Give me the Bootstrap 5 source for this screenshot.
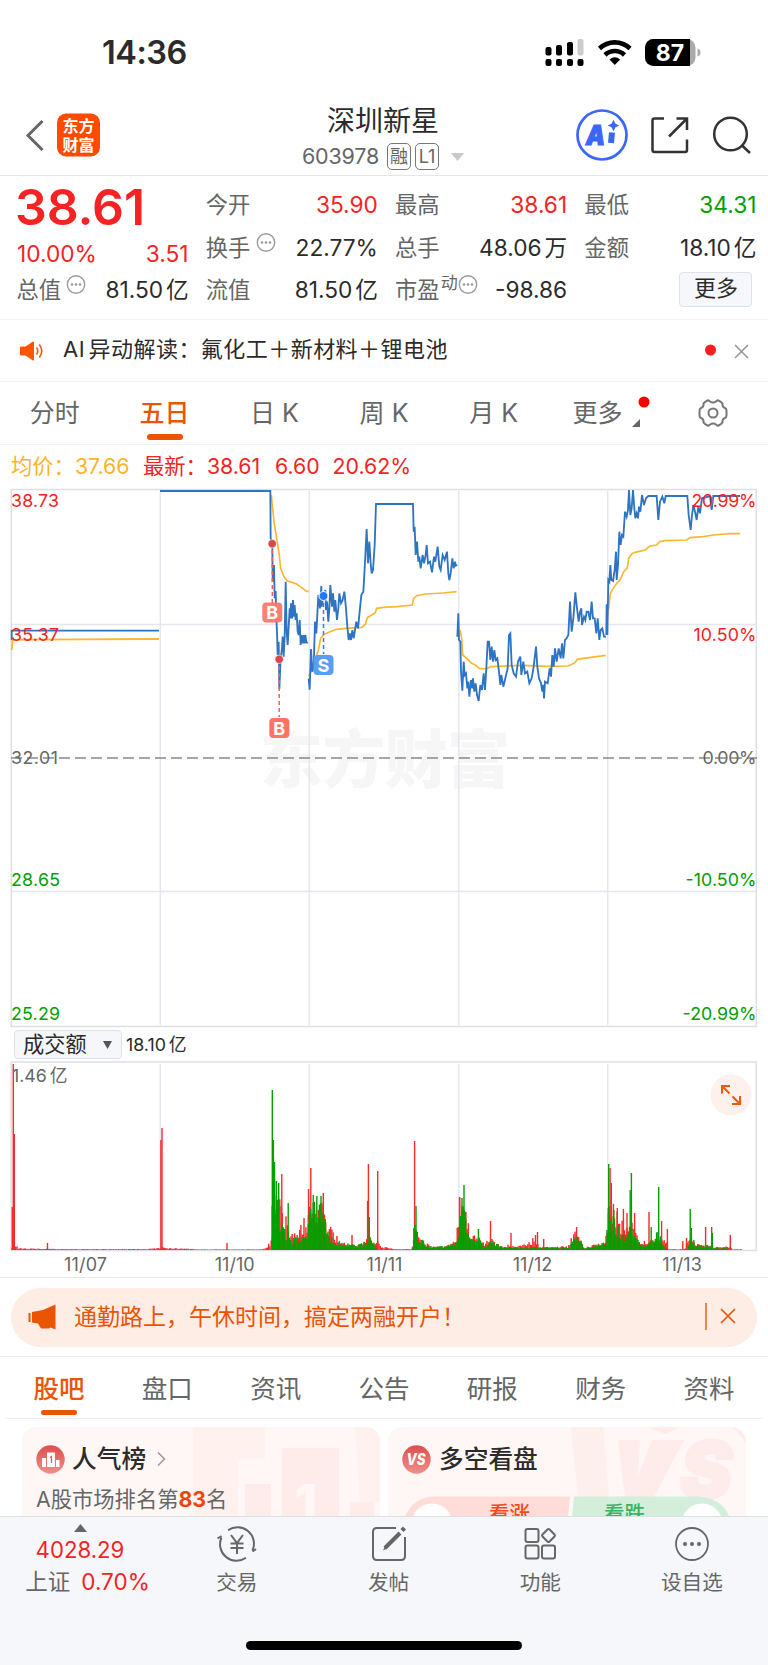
<!DOCTYPE html>
<html lang="zh-CN">
<head>
<meta charset="utf-8">
<meta name="viewport" content="width=device-width, initial-scale=1">
<title>深圳新星 603978</title>
<link href="https://cdn.jsdelivr.net/npm/bootstrap@5.3.0/dist/css/bootstrap.min.css" rel="stylesheet">
<style>
:root{--up:#f52323;--down:#00a000;--brand:#ea5504;--ink:#2b2b2b;--sub:#666}
body{font-family:Inter,"Noto Sans CJK SC",sans-serif;color:var(--ink);background:#fff;width:768px;height:1665px;overflow:hidden;line-height:1}
svg{display:block;flex:none}
svg text{font-family:Inter,"Noto Sans CJK SC",sans-serif}
.up{color:var(--up)}.down{color:var(--down)}.brand{color:var(--brand)}.sub{color:var(--sub)}
.status{height:100px;padding:6px 67px 0 102px}
.clock{font-size:32.5px;font-weight:600;letter-spacing:-.5px}
.topbar{height:76px;border-bottom:1.5px solid #e6e6e6;padding:0 16px 0 24px}
.topbar .side{width:250px;padding-bottom:5px}
.topbar .mid{margin-left:-10px}
.stock{font-size:28px;line-height:32px}
.code{font-size:21.5px;letter-spacing:-.2px;margin-top:6px}
.chip{border:1.3px solid #777;border-radius:5px;height:27px;width:24px;font-size:18px;letter-spacing:0}
.quote{height:144px;padding:8px 12px 0 17px;border-bottom:1.5px solid #f3f3f3;display:grid;grid-template-columns:repeat(4,171.6px);column-gap:17.7px;grid-template-rows:repeat(3,42.7px);font-size:22.3px;align-items:center}
.quote .num{font-size:22.7px;word-spacing:-3.5px}
.quote .sub{margin-left:-.5px}
.quote .sub svg{margin-top:-4px}
.price{font-size:50px;font-weight:600;letter-spacing:-.1px;margin:3px 0 0 -2px}
.chg{margin-top:-4px}
.more{width:73px;height:35px;background:#f6f7fa;border:1.5px solid #dfe2e8;border-radius:4px;font-size:22px;margin:-3px 4px 0 0;padding-bottom:2px}
.news{height:62px;border-bottom:1.5px solid #f3f3f3;padding:0 19px 0 20px;font-size:22px}
.news .msg{margin:-4px 0 0 19px;letter-spacing:.45px;word-spacing:-3px}
.tabs{height:63px;border-bottom:1.5px solid #f3f3f3;font-size:25px;color:var(--sub)}
.tabs>div{width:110px}
.on{color:var(--brand);font-weight:500}
.on::after{content:"";position:absolute;left:50%;margin-left:-18px;width:36px;height:5.5px;border-radius:3px;background:var(--brand);bottom:4.5px}
.legend5{height:40px;padding:4px 0 0 11px;font-size:21.3px}
.pick{width:108px;height:29px;background:#f6f7fa;border:1.5px solid #dfe2e8;border-radius:4px;font-size:21.2px;padding:0 9px 0 8px}
.turn{font-size:17.8px;margin-left:4px;word-spacing:-2px}
.promo{height:59.5px;border-radius:30px;background:#feede5;margin:10px 11px 0;padding:0 21px 0 17px;font-size:23px}
.tabs2{height:62px;margin:0 5px;padding-top:2px;font-size:25.5px;color:var(--sub);border-bottom:1.5px solid #eee;}
.tabs2>div{width:108px}
.tabs2 .on::after{bottom:3px}
.rule{border-top:1.5px solid #e8e8e8}
.tiles{height:97px;padding:8px 22px 0;gap:8px;overflow:hidden}
.tile{width:358px;height:120px;border-radius:14px;background:#fff7f5;overflow:hidden}
.tile h2{font-size:24.7px;font-weight:500;margin:1px 0 0}
.dock{height:149px;background:#f6f7fa;border-top:1.5px solid #dddee1;font-size:20.6px;color:var(--sub)}
.dock .item{width:151.7px;padding-top:9px}
.dock .item span{margin-top:11px}
.homebar{width:276px;height:9.5px;border-radius:5px;background:#000;left:246px;bottom:15px}
</style>
</head>
<body>
<div class="status d-flex align-items-center justify-content-between">
  <span class="clock">14:36</span>
  <svg width="156" height="30" viewBox="545 37 156 30">
    <g fill="#000"><rect x="545.5" y="46" width="6" height="8.500" rx="2"/><rect x="556" y="44" width="6" height="10.500" rx="2"/><rect x="567" y="41" width="6" height="13.500" rx="2"/><rect x="577.500" y="38" width="6" height="16.500" rx="2" fill="#ccc"/>
    <rect x="545.5" y="58" width="6" height="7" rx="2"/><rect x="556" y="58" width="6" height="7" rx="2"/><rect x="567" y="58" width="6" height="7" rx="2"/><rect x="577.500" y="58" width="6" height="7" rx="2"/></g>
    <g fill="none" stroke="#000" stroke-width="4.600"><path d="M599.500 47.500a22 22 0 0 1 30.500 0"/><path d="M605 54a14 14 0 0 1 19.500 0"/></g><path d="M609.500 58.500q5.300-4.500 10.600 0l-5.300 5.500z"/>
    <rect x="645" y="38" width="50.500" height="27" rx="8.500" fill="#aaa"/><path d="M653.500 38H690v27h-36.500a8.500 8.500 0 0 1-8.500-8.500v-10a8.500 8.500 0 0 1 8.500-8.500z"/><path d="M697.500 47.500q3 1 3 4t-3 4z" fill="#aaa"/>
    <text x="670" y="59.500" font-size="23" font-weight="700" fill="#fff" text-anchor="middle">87</text>
  </svg>
</div>

<div class="topbar d-flex justify-content-between align-items-center">
  <div class="side d-flex align-items-center">
    <svg width="78" height="46" viewBox="24 112 78 46"><path d="M42.500 121 28 135.500l14.500 14.500" fill="none" stroke="#666" stroke-width="3"/><rect x="57" y="113.500" width="43" height="43" rx="9" fill="#ff4a00"/><g fill="#fff" font-size="16" font-weight="700" text-anchor="middle"><text x="78.500" y="132">东方</text><text x="78.500" y="150.500">财富</text></g></svg>
  </div>
  <div class="mid d-flex flex-column align-items-center">
    <div class="stock">深圳新星</div>
    <div class="code sub d-flex align-items-center gap-1">603978 <span class="chip d-flex align-items-center justify-content-center ms-1">融</span><span class="chip d-flex align-items-center justify-content-center">L1</span><svg class="ms-2" width="13" height="8"><path d="M0 0h13l-6.500 8z" fill="#c8c8c8"/></svg></div>
  </div>
  <div class="side d-flex justify-content-end align-items-center">
    <svg width="176" height="54" viewBox="576 108 176 54" fill="none" stroke="#333" stroke-width="2.500"><circle cx="602" cy="135" r="24.500" stroke="#3b66fa" stroke-width="2.700"/><text x="586" y="145" font-size="27" font-weight="900" font-style="italic" fill="#3b66fa" stroke="#3b66fa" stroke-width="1.200" textLength="19" lengthAdjust="spacingAndGlyphs">A</text><path d="M612 132.500 611 143" stroke="#3b66fa" stroke-width="6"/><path d="m613.500 121.500 1.300 2.700 2.700 1.300-2.700 1.300-1.300 2.700-1.300-2.700-2.700-1.300 2.700-1.300z" fill="#3b66fa" stroke="#3b66fa" stroke-width="1.500"/>
    <path d="M664 118.500h-9.500q-2 0-2 2v29.500q0 2 2 2H685q2 0 2-2v-10.500M669 136.500l18-18M676.500 118.500H687V130"/><circle cx="730.500" cy="134" r="16.300"/><path d="m742 145.500 8 7.500"/></svg>
  </div>
</div>

<div class="quote">
  <div class="price up">38.61</div>
  <div class="d-flex justify-content-between"><span class="sub">今开</span><span class="num up">35.90</span></div>
  <div class="d-flex justify-content-between"><span class="sub">最高</span><span class="num up">38.61</span></div>
  <div class="d-flex justify-content-between"><span class="sub">最低</span><span class="num down">34.31</span></div>
  <div class="chg d-flex justify-content-between up pt-3"><span class="num">10.00%</span><span class="num">3.51</span></div>
  <div class="d-flex justify-content-between"><span class="sub d-flex">换手<svg style="margin-left:6px" width="20" height="20"><use href="#dots"/></svg></span><span class="num">22.77%</span></div>
  <div class="d-flex justify-content-between"><span class="sub">总手</span><span class="num">48.06 万</span></div>
  <div class="d-flex justify-content-between"><span class="sub">金额</span><span class="num">18.10 亿</span></div>
  <div class="d-flex justify-content-between"><span class="sub d-flex">总值<svg style="margin-left:5px" width="20" height="20"><use href="#dots"/></svg></span><span class="num">81.50 亿</span></div>
  <div class="d-flex justify-content-between"><span class="sub">流值</span><span class="num">81.50 亿</span></div>
  <div class="d-flex justify-content-between"><span class="sub d-flex">市盈<span style="font-size:17px;margin:-4px 0 0 1px">动</span><svg width="20" height="20"><use href="#dots"/></svg></span><span class="num">-98.86</span></div>
  <div class="d-flex justify-content-end"><div class="more d-flex align-items-center justify-content-center">更多</div></div>
</div>
<svg width="0" height="0" class="position-absolute"><symbol id="dots" viewBox="0 0 20 20"><circle cx="10" cy="9.500" r="8.700" fill="none" stroke="#999" stroke-width="1.400"/><g fill="#999"><circle cx="6" cy="9.500" r="1.300"/><circle cx="10" cy="9.500" r="1.300"/><circle cx="14" cy="9.500" r="1.300"/></g></symbol></svg>

<div class="news d-flex align-items-center">
  <svg width="24" height="20" viewBox="0 0 24 20"><path d="M0 6.500q0-1 1-1h4.500L13 .5q1-.5 1 1v17q0 1.500-1 1L5.500 14.500H1q-1 0-1-1z" fill="#ff5500"/><path d="M16.500 6.500q2.500 3.500 0 7M19.300 3.500q5 6.500 0 13" fill="none" stroke="#ff5500" stroke-width="1.600"/></svg>
  <span class="msg flex-grow-1">AI 异动解读：氟化工＋新材料＋锂电池</span>
  <svg width="44" height="16"><circle cx="5.500" cy="7" r="5.500" fill="#f5201f"/><path d="m30 2 13 13M43 2 30 15" stroke="#999" stroke-width="1.600"/></svg>
</div>

<div class="tabs d-flex">
  <div class="d-flex align-items-center justify-content-center">分时</div>
  <div class="d-flex align-items-center justify-content-center position-relative on">五日</div>
  <div class="d-flex align-items-center justify-content-center">日 K</div>
  <div class="d-flex align-items-center justify-content-center">周 K</div>
  <div class="d-flex align-items-center justify-content-center">月 K</div>
  <div class="d-flex align-items-center justify-content-center">更多<svg class="ms-2" style="margin-right:-16px" width="20" height="34"><circle cx="14" cy="6" r="5.500" fill="red"/><path d="M2 31h8V23z" fill="#666"/></svg></div>
  <div class="d-flex align-items-center justify-content-center"><svg width="30" height="28" viewBox="-15 -14 30 28" fill="none" stroke="#777" stroke-width="2" stroke-linejoin="round"><path d="M-5.500-12.500q1.500-.5 2.500 1Q0-9.500 3-11.500q1-1.500 2.500-1 3 1.500 4 3-.5 3.500 2.500 4.500 1.500.5 1.500 2.500V2.500q0 2-1.500 2.500-3 1-2.500 4.500-1 1.500-4 3-1.500.5-2.500-1Q0 9.500-3 11.500q-1 1.500-2.500 1-3-1.500-4-3Q-9 6-12 5q-1.500-.5-1.500-2.500v-5Q-13.500-4.500-12-5q3-1 2.500-4.500 1-1.500 4-3z"/><circle r="4.500"/></svg></div>
</div>

<div class="legend5 d-flex align-items-center">
  <span style="color:#fdb22b;width:132px">均价：37.66</span><span class="up" style="width:132px">最新：38.61</span><span class="up" style="width:57.500px">6.60</span><span class="up">20.62%</span>
</div>

<svg width="768" height="543" viewBox="0 485 768 543" font-size="17.800">
  <g fill="#f6f6f6" font-size="63" font-weight="900"><text x="260" y="782" textLength="250">东方财富</text></g>
  <g fill="none" stroke="#e4e7f0" stroke-width="1.500"><path d="M160.300 491v534M309.300 491v534M458.700 491v534M607.700 491v534M11 624.500h745M11 891.500h745"/><path d="M11.300 1026.500v-537h745v537z" stroke="#dddfe4"/></g>
  <path d="M11 758H757" stroke="#888" stroke-width="1.600" stroke-dasharray="11 5"/>
  <g transform="translate(0 485) scale(.33333)" fill="none" stroke="#2f74c3" stroke-width="5.500">
    <path d="M35 465V437H477"/><path d="M35 495 38 466 70 464 477 462" stroke="#fdb62f"/>
    <polyline stroke="#fdb62f" stroke-width="5" points="814,30 822,110 830,160 838,210 842,250 852,275 862,288 875,292 890,297 905,308 920,319 926,319"/>
    <polyline points="480,18 811,18 812,160 817,175 818,290 822,240 824,340 827,318 829,400 831,440 833,510 836,470 838,612 842,520 846,490 848,455 851,515 854,455 857,290 860,440 863,480 866,425 869,370 871,400 873,355 876,400 879,345 882,395 884,360 887,405 890,385 893,440 896,450 899,405 902,480 905,450 908,475 911,450 914,475 916,450 919,472 924,474"/>
  </g>
  <g transform="translate(250 485) scale(.33333)" fill="none" stroke="#2f74c3" stroke-width="5.500">
    <polyline stroke="#fdb62f" stroke-width="5" points="176,575 190,545 205,495 212,460 222,448 240,440 260,433 290,430 335,427 346,418 352,398 365,390 376,383 380,370 400,367 440,365 487,360 491,340 500,332 525,327 580,324 620,320"/>
    <polyline points="176,580 179,614 183,492 187,560 191,545 195,410 199,445 205,330 210,370 214,303 215,365 220,335 226,315 228,375 231,350 235,410 238,370 241,300 246,365 249,325 253,380 256,345 261,405 265,370 268,325 273,355 278,345 283,320 288,370 292,425 296,465 300,445 303,465 307,435 311,460 315,435 319,410 324,430 329,380 334,330 340,320 344,250 350,132 354,235 358,170 362,235 365,265 369,255 374,180 378,57 489,57 491,140 494,125 497,210 501,170 505,230 508,215 512,250 518,210 522,235 527,210 530,180 534,235 540,230 546,262 552,215 556,230 563,185 568,245 572,255 578,210 584,225 591,200 595,265 598,285 602,265 607,220 611,250 615,230 617,242 622,240"/>
  </g>
  <g transform="translate(440 485) scale(.33333)" fill="none" stroke="#2f74c3" stroke-width="5.500">
    <polyline stroke="#fdb62f" stroke-width="5" points="60,435 65,460 68,510 80,520 95,535 108,541 118,550 138,552 152,545 250,541 320,544 385,543 405,533 412,523 430,520 497,511"/>
    <polyline stroke="#fdb62f" stroke-width="5" points="500,400 506,370 511,325 520,310 530,295 540,285 550,262 562,248 566,220 575,207 585,202 615,195 630,183 650,180 658,170 675,167 740,165 750,158 790,155 820,150 870,146 900,146"/>
    <polyline points="52,455 55,385 57,465 61,470 63,560 67,617 71,530 74,570 78,565 82,610 85,590 88,635 93,585 97,610 99,580 103,620 107,595 111,630 116,648 121,600 126,615 131,565 135,615 139,550 143,470 147,470 151,525 155,485 159,530 163,495 167,525 172,520 177,560 181,600 184,570 190,605 196,580 203,550 207,450 211,445 215,540 221,565 228,575 234,530 241,515 244,570 250,530 255,565 262,560 268,595 275,580 281,545 288,485 292,545 297,580 303,595 307,620 310,600 312,640 315,590 323,595 329,550 333,575 337,510 341,545 345,490 350,530 356,490 362,520 366,475 370,520 375,465 380,460 385,450 390,350 395,440 400,400 406,322 411,370 416,410 420,380 424,370 426,420 432,395 436,405 440,380 445,380 450,405 455,350 459,400 464,400 469,445 473,400 478,465 482,435 487,430 492,455 498,455"/>
    <polyline points="499,450 500,358 502,450 505,285 508,290 511,240 514,285 519,288 524,255 528,200 530,285 534,240 538,140 542,180 546,150 550,155 555,80 560,95 564,75 567,15 571,90 575,70 579,15 583,70 586,100 590,85 594,100 597,65 601,80 606,30 612,60 618,40 625,33 650,33 655,105 660,50 667,35 673,55 677,33 742,33 746,90 752,135 756,90 760,60 765,80 770,105 775,65 780,85 786,40 810,33 815,75 820,33 900,33"/>
  </g>
  <g fill="#d9474b" stroke="none"><path d="M272.300 543v60M279.200 659v58" stroke="#f0605c" stroke-width="1.500" stroke-dasharray="4 3"/><g stroke="#fff" stroke-width=".6"><circle cx="272.200" cy="543.700" r="4.200"/><circle cx="279.200" cy="659.300" r="4.200"/></g></g>
  <path d="M323.500 596v58" stroke="#2f7cf0" stroke-width="1.500" stroke-dasharray="4 3"/><circle cx="323.500" cy="596" r="4.500" fill="#1f78f5" stroke="#fff"/>
  <g font-size="18" font-weight="700" text-anchor="middle" fill="#fff"><rect x="262.300" y="602.500" width="20" height="20" rx="4" fill="#fd7467" fill-opacity=".93"/><text x="272.300" y="619">B</text><rect x="269.300" y="718" width="20" height="20" rx="4" fill="#fd7467"/><text x="279.300" y="734.500">B</text><rect x="313.500" y="655" width="20" height="20" rx="4" fill="#5a9df9"/><text x="323.500" y="671.500">S</text></g>
  <g fill="#f52323"><text x="11" y="507" textLength="48">38.73</text><text x="11" y="641" textLength="48">35.37</text><g text-anchor="end"><text x="756.500" y="507" textLength="65">20.99%</text><text x="756.500" y="641" textLength="63">10.50%</text></g></g>
  <g fill="#666"><text x="11" y="763.500" textLength="47">32.01</text><text x="756.500" y="763.500" text-anchor="end" textLength="54">0.00%</text></g>
  <g fill="#00a000"><text x="11" y="886" textLength="49">28.65</text><text x="11" y="1020" textLength="49">25.29</text><g text-anchor="end"><text x="756.500" y="886" textLength="71">-10.50%</text><text x="756.500" y="1020" textLength="74">-20.99%</text></g></g>
</svg>

<div class="d-flex align-items-center" style="height:33px;padding-left:14px">
  <div class="pick d-flex align-items-center justify-content-between">成交额<svg width="9" height="8"><path d="M0 0h9L4.500 8z" fill="#555"/></svg></div>
  <span class="turn">18.10 亿</span>
</div>

<svg width="768" height="215.500" viewBox="0 1061 768 215.500">
  <path d="M160.300 1064v186M309.300 1064v186M458.700 1064v186M607.700 1064v186" stroke="#e4e7f0" stroke-width="1.500"/>
  <path d="M11.300 1250.500V1062h745v188.500z" fill="none" stroke="#dddfe4" stroke-width="1.500"/>
  <g id="vol"></g>
  <text x="12" y="1081.500" font-size="17.800" fill="#666" word-spacing="-2">1.46 亿</text>
  <circle cx="731" cy="1095" r="20.500" fill="#fef1eb"/><g fill="none" stroke="#ee5a10" stroke-width="2"><path d="M722 1093.500v-7.500h8M722.500 1086.500l7 7M740 1096v8h-8M739.500 1103.500l-7-7"/></g>
  <g font-size="18" fill="#666" text-anchor="middle"><text x="85.500" y="1271" textLength="43">11/07</text><text x="234.700" y="1271">11/10</text><text x="384.500" y="1271">11/11</text><text x="532.500" y="1271">11/12</text><text x="682" y="1271">11/13</text></g>
</svg>
<div class="rule"></div>

<div class="promo brand d-flex align-items-center">
  <svg width="28" height="26" viewBox="28 1304 28 26" fill="#ea5504"><path d="M28.500 1313h2v9h-2zM32 1312l11-2 12.500-5.500v25l-5-2-1.500 1h-8l-3-5-6-1z"/></svg>
  <span class="flex-grow-1" style="margin-left:18px">通勤路上，午休时间，搞定两融开户！</span>
  <svg width="31" height="28"><path d="M1 0v27" stroke="#ea5504" stroke-width="1.400"/><path d="m16 6 14 14M30 6 16 20" stroke="#ea5504" stroke-width="1.700"/></svg>
</div>
<div class="rule" style="margin-top:9px"></div>
<div class="tabs2 d-flex justify-content-between">
  <div class="d-flex align-items-center justify-content-center position-relative on">股吧</div>
  <div class="d-flex align-items-center justify-content-center">盘口</div>
  <div class="d-flex align-items-center justify-content-center">资讯</div>
  <div class="d-flex align-items-center justify-content-center">公告</div>
  <div class="d-flex align-items-center justify-content-center">研报</div>
  <div class="d-flex align-items-center justify-content-center">财务</div>
  <div class="d-flex align-items-center justify-content-center">资料</div>
</div>

<div class="tiles d-flex">
  <div class="tile position-relative">
    <svg class="position-absolute top-0 start-0" width="358" height="120" viewBox="22 1427 358 120"><g fill="#fdecea"><path d="M193 1427h72v32h-27v88h-45z" opacity=".6"/><path d="M282 1448h57v99h-57zM245 1484h26v63h-26zM350 1502h24v45h-24z"/><path d="M355 1427h25v75h-20z" opacity=".6"/></g><text x="306" y="1522" font-size="52" font-weight="800" fill="#fff7f5" text-anchor="middle">1</text></svg>
    <div class="position-relative d-flex align-items-center" style="padding:17px 0 0 14px">
      <svg width="29" height="29"><defs><linearGradient id="rg" x2="0" y2="1"><stop stop-color="#dc4f4c"/><stop offset="1" stop-color="#f0908b"/></linearGradient></defs><circle cx="14.500" cy="14.500" r="14.200" fill="url(#rg)"/><path d="M6 13h4v9H6zM11 7.500h8V22h-8zM20 15h3.500v7H20z" fill="#fff"/><path d="M14 12.500l1.500-1V18" stroke="#e0605b" stroke-width="1.300" fill="none"/></svg>
      <h2 style="margin-left:7px">人气榜</h2><svg style="margin-left:11px" width="9" height="16"><path d="m1 1.500 6.500 6.500L1 14.500" fill="none" stroke="#999" stroke-width="1.500"/></svg>
    </div>
    <div class="position-relative sub" style="font-size:21.300px;margin:14px 0 0 14px">A股市场排名第<b style="color:#ee4414">83</b>名</div>
  </div>
  <div class="tile position-relative">
    <svg class="position-absolute top-0 start-0" width="358" height="120" viewBox="388 1427 358 120"><g fill="#fdecea"><path d="M571 1427h32l6 70h-31z" opacity=".8"/><path d="M618 1440h22l-2 36 14-36h32l-30 57h-29z"/><path d="M648 1427h32l-15 7zM733 1427q13 4 13 16z"/></g><text x="680" y="1498" font-size="78" font-weight="900" font-style="italic" fill="#fdecea" stroke="#fdecea" stroke-width="3">S</text>
      <path d="M436 1496.500h134l-5 50H402v-16q4-34 34-34z" fill="#feddd9"/><path d="M574 1496.500h124q32 2 34 34v16H569z" fill="#d4eedc"/><circle cx="432" cy="1524" r="20.500" fill="#fff"/><circle cx="702" cy="1524" r="20.500" fill="#fff"/>
      <g font-size="20.500" font-weight="500"><text x="489" y="1520.500" fill="#ee4b1c">看涨</text><text x="604" y="1520.500" fill="#3bb365">看跌</text></g></svg>
    <div class="position-relative d-flex align-items-center" style="padding:17px 0 0 14px">
      <svg width="29" height="29"><circle cx="14.500" cy="14.500" r="14.200" fill="url(#rg)"/><text x="14" y="20" font-size="15.500" font-weight="800" font-style="italic" fill="#fff" text-anchor="middle" textLength="19" lengthAdjust="spacingAndGlyphs">VS</text></svg>
      <h2 style="margin-left:8px">多空看盘</h2>
    </div>
  </div>
</div>

<div class="dock position-relative d-flex">
  <div class="d-flex flex-column align-items-center" style="width:161px;padding-top:7px">
    <svg width="13" height="8"><path d="M0 8h13L6.500 0z" fill="#666"/></svg>
    <span class="up" style="font-size:22.200px;margin-top:7px;margin-left:-1px">4028.29</span>
    <span style="font-size:22.500px;margin-top:9.500px;margin-left:14px">上证<span class="up ms-2" style="padding-left:3px">0.70%</span></span>
  </div>
  <div class="item d-flex flex-column align-items-center">
    <svg width="42" height="36" viewBox="-21 -18 42 36" fill="none" stroke="#666" stroke-width="2"><path d="M-9-13.800A16.500 16.500 0 0 1 15.500 6.500M15.500 7.500l3.500-2.500M9 13.800A16.500 16.500 0 0 1-15.500-6.500M-15.500-8l-4 2.500M-6-9 0-1 6-9M0-1V10M-6.500-.5h13M-6.500 4h13"/></svg>
    <span>交易</span></div>
  <div class="item d-flex flex-column align-items-center">
    <svg width="36" height="36" viewBox="-18 -18 36 36" fill="none" stroke="#666" stroke-width="2"><path d="M7-16H-12q-4 0-4 4V12q0 4 4 4H12q4 0 4-4V-7"/><path d="M-4 4 11-11" stroke-width="4"/><path d="M13-13.500l2.500-2.500" stroke-width="4.500"/><path d="M-6 6.500-2 4.500-4 2z" fill="#666" stroke="none"/></svg>
    <span>发帖</span></div>
  <div class="item d-flex flex-column align-items-center">
    <svg width="34" height="36" viewBox="-17 -18 34 36" fill="none" stroke="#666" stroke-width="2"><rect x="-14.500" y="-15" width="13" height="13" rx="2"/><rect x="-14.500" y="1.500" width="13" height="13" rx="2"/><rect x="2" y="1.500" width="13" height="13" rx="2"/><rect x="3.500" y="-13.500" width="10" height="10" rx="1.500" transform="rotate(45 8.500 -8.500)"/></svg>
    <span>功能</span></div>
  <div class="item d-flex flex-column align-items-center">
    <svg width="36" height="36" viewBox="-18 -18 36 36"><circle r="16" fill="none" stroke="#666" stroke-width="1.800"/><g fill="#666"><circle cx="-7" r="2"/><circle r="2"/><circle cx="7" r="2"/></g></svg>
    <span>设自选</span></div>
  <div class="homebar position-absolute"></div>
</div>
<script src="https://cdn.jsdelivr.net/npm/bootstrap@5.3.0/dist/js/bootstrap.bundle.min.js"></script>
<script>
// Turnover bars: envelopes are [x, height] pairs, spikes are single minutes.
const red=[[12,3],[16,6],[18,2],[25,1.5],[45,1.5],[60,1],[145,1],[158,2],[163,3],[166,2],[185,1.5],[200,.7],[262,.7],[267,5],[272,10],[276,60],[281,48],[286,34],[290,18],[297,18],[301,26],[307,22],[310,55],[315,48],[323,50],[328,26],[334,18],[340,10],[350,8],[360,5],[366,14],[370,18],[373,6],[378,10],[381,4],[386,3],[395,.8],[412,1],[414,24],[418,16],[423,10],[430,4],[445,3],[456,12],[459,50],[463,48],[467,32],[472,16],[480,12],[485,8],[490,18],[494,8],[503,3],[510,6],[516,3],[534,12],[540,3],[568,4],[572,14],[577,20],[580,10],[585,3],[605,8],[609,60],[613,45],[618,38],[624,24],[632,26],[640,10],[655,10],[662,18],[667,8],[668,.8],[684,1],[690,12],[695,7],[704,6],[716,3],[730,4],[732,.8],[742,.8]];
const green=[[271,0],[272,95],[275,75],[278,60],[281,30],[287,16],[293,10],[299,18],[306,14],[309,46],[314,52],[323,48],[327,20],[333,12],[340,6],[350,8],[356,4],[364,10],[370,14],[374,8],[377,0],[412,0],[415,34],[420,13],[430,4],[448,4],[457,9],[460,50],[464,48],[467,24],[474,10],[480,11],[486,4],[492,12],[498,7],[505,3],[570,3],[573,15],[579,15],[585,2],[600,6],[606,10],[609,60],[614,38],[620,22],[626,18],[632,26],[638,12],[644,4],[651,9],[658,20],[664,4],[667,0],[688,0],[691,18],[696,6],[715,3],[727,2],[731,0]];
const spikes=[[12.3,43,0],[13.3,186,0],[14.3,116,0],[47.5,7,0],[160.900,110,0],[162,122,0],[227,7,0],[272.3,160,1],[273.400,110,1],[274.500,88,1],[276.300,69,1],[278.700,67,1],[281.800,76,0],[288.200,47,1],[304,32,0],[308.500,61,0],[310.800,82,0],[313.300,55,1],[316.800,54,1],[321,54,1],[323.300,57,0],[325.200,31,1],[352,15,0],[367.600,49,0],[368.400,86,0],[369.300,33,1],[377.700,79,0],[414.600,109,0],[416,44,1],[459.600,53,0],[462,52,1],[464,65,1],[465.500,38,0],[478.400,21,1],[490.500,29,0],[511,17,0],[535.500,15,0],[537.500,18,0],[543.700,11,0],[576.600,23,0],[608.700,86,1],[610.100,82,0],[611.300,67,0],[613.900,40,1],[617.300,42,0],[623.400,41,0],[627,37,0],[630.200,60,1],[631.400,77,1],[634.600,37,0],[649,38,0],[651.200,23,1],[658.700,63,1],[661.600,29,0],[667.400,21,0],[682.800,9,0],[686.500,12,0],[690.200,41,1],[691.400,22,1],[705.600,23,0],[711.700,23,0],[712.400,17,1],[730.300,15,0]];
const at=(e,x)=>{for(let i=1;i<e.length;i++)if(x>=e[i-1][0]&&x<=e[i][0]){const[a,b]=e[i-1],[c,d]=e[i];return b+(d-b)*(x-a)/(c-a)}return 0};
const noise=n=>{const v=Math.sin(n*12.9898)*43758.5453;return v-Math.floor(v)};
let bars="";
const bar=(x,h,g)=>{if(h>.3)bars+=`<rect x="${(x-.7).toFixed(1)}" y="${(1250-h).toFixed(1)}" width="1.400" height="${h.toFixed(1)}" fill="${g?"#00a000":"#f82a2a"}"/>`};
for(let x=12;x<743;x+=1.24){bar(x,at(red,x)*(.45+.6*noise(x)),0)}
for(const s of spikes)if(!s[2])bar(...s);
for(let x=271;x<732;x+=1.24){bar(x,at(green,x)*(.4+.6*noise(x+9)),1)}
for(const s of spikes)if(s[2])bar(...s);
document.getElementById("vol").innerHTML=bars;
</script>
</body>
</html>
